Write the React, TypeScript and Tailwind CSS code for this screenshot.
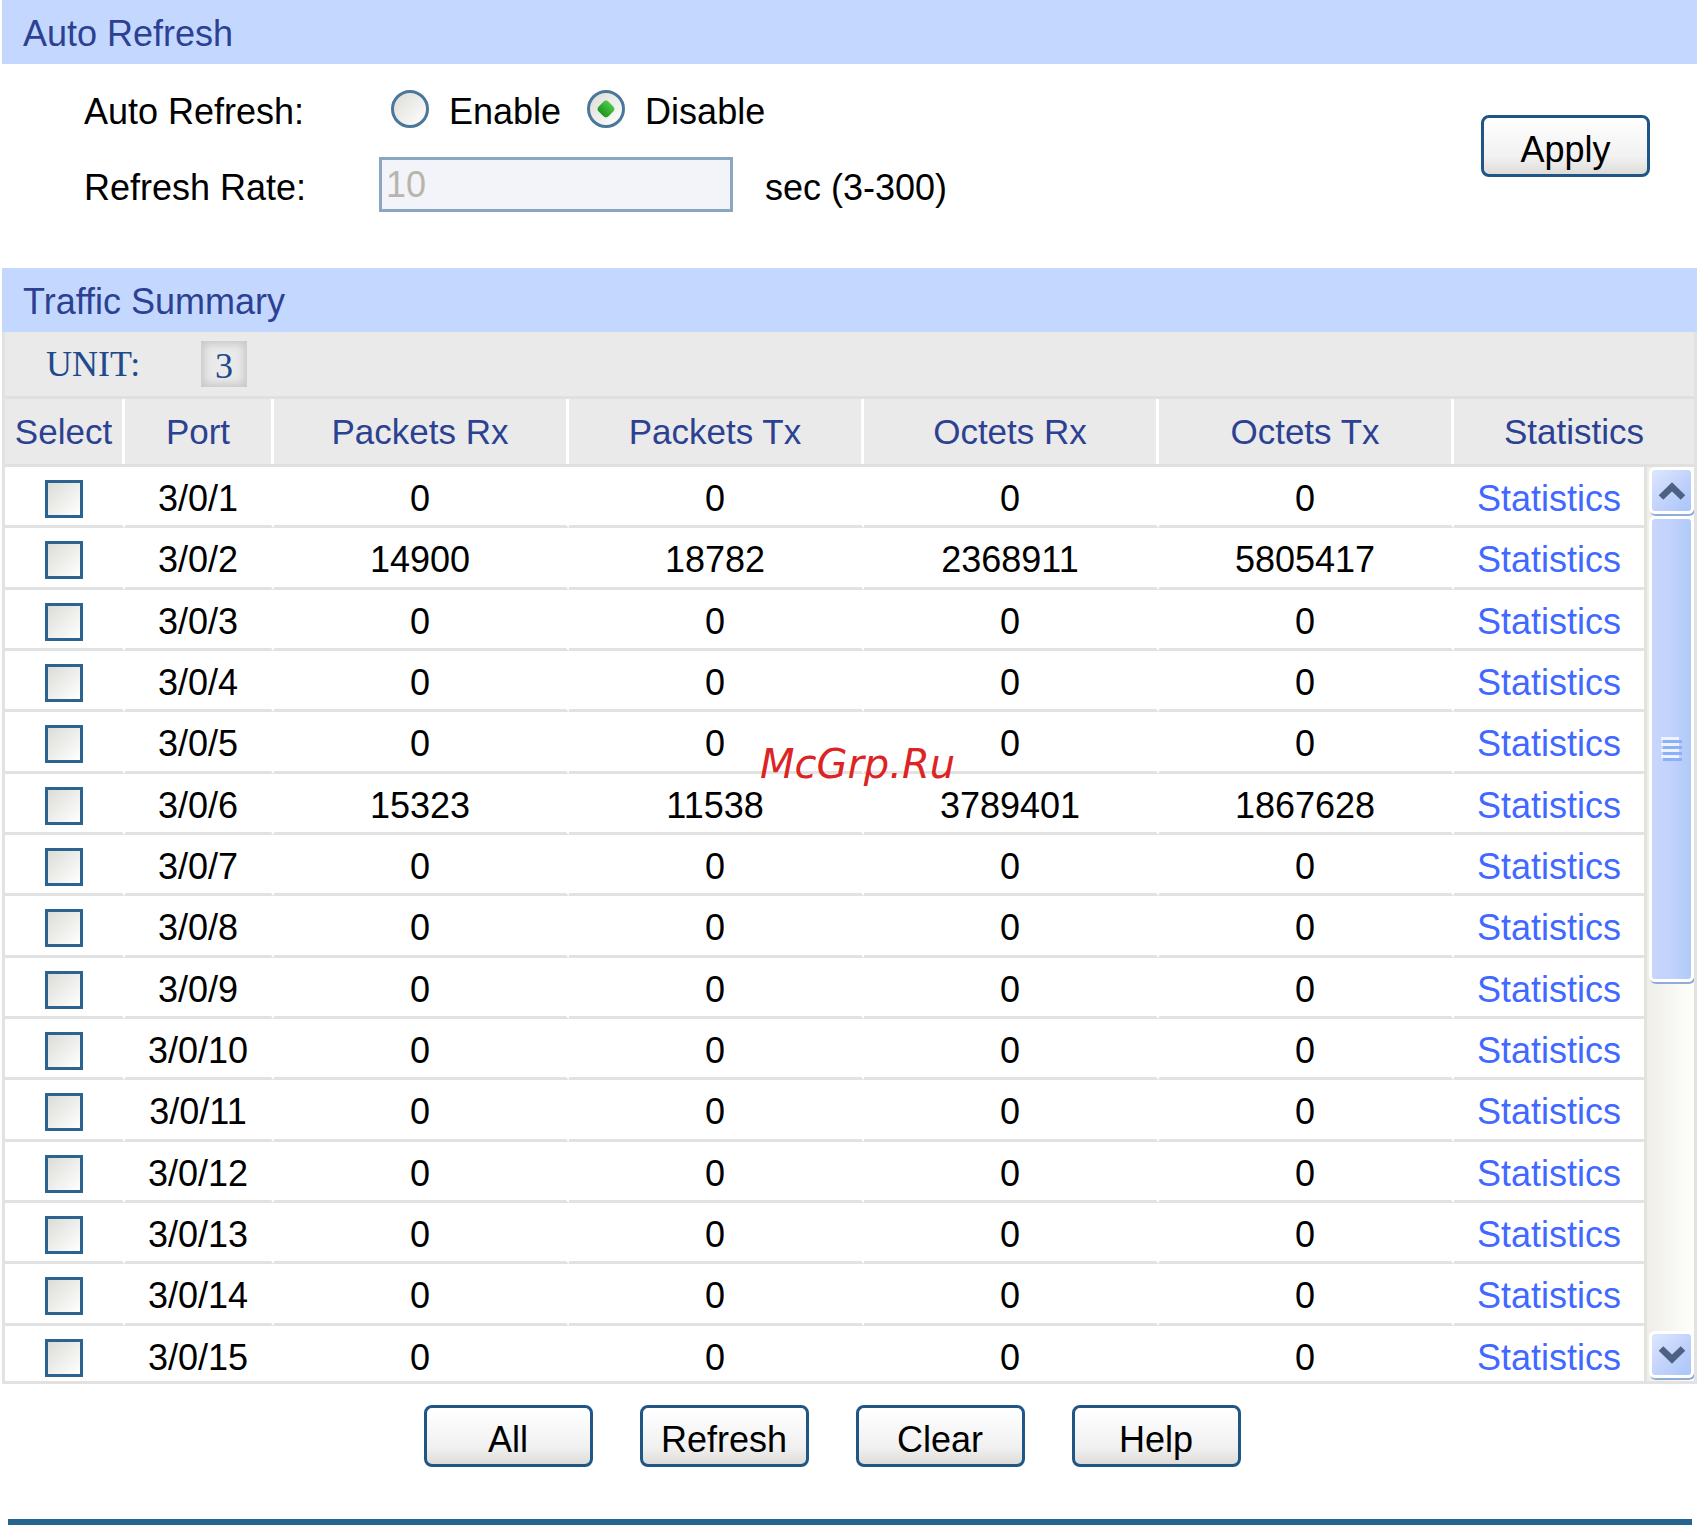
import { useState } from "react";

type PortRow = {
  port: string;
  packetsRx: number;
  packetsTx: number;
  octetsRx: number;
  octetsTx: number;
};

const traffic: Record<number, [number, number, number, number]> = {
  2: [14900, 18782, 2368911, 5805417],
  6: [15323, 11538, 3789401, 1867628],
};

const rows: PortRow[] = Array.from({ length: 15 }, (_, i) => {
  const [packetsRx, packetsTx, octetsRx, octetsTx] = traffic[i + 1] ?? [0, 0, 0, 0];
  return { port: `3/0/${i + 1}`, packetsRx, packetsTx, octetsRx, octetsTx };
});

const actions = ["All", "Refresh", "Clear", "Help"];

const radioClass =
  "size-[38px] shrink-0 appearance-none rounded-full border-[3px] border-[#4b7799] bg-linear-to-br from-[#dcdcd7] to-white flex items-center justify-center checked:before:block checked:before:size-[14px] checked:before:rotate-45 checked:before:rounded-[4px] checked:before:bg-linear-to-b checked:before:from-[#4cc94a] checked:before:to-[#1c961c]";

function SectionTitle({ children }: { children: string }) {
  return (
    <h2 className="flex h-16 items-center bg-[#c4d8ff] pt-[3px] pl-[21px] text-[#2c4192]">
      {children}
    </h2>
  );
}

function PushButton({ children }: { children: string }) {
  return (
    <button
      type="button"
      className="flex h-[62px] w-[169px] shrink-0 items-center justify-center rounded-[8px] border-[3px] border-[#205685] bg-linear-to-b from-white via-[#f1f1f1] via-70% to-[#dddcd8] pt-2 text-black"
    >
      {children}
    </button>
  );
}

function ScrollArrow({ up }: { up?: boolean }) {
  return (
    <button
      type="button"
      aria-label={up ? "Scroll up" : "Scroll down"}
      className="flex h-[47px] w-[45px] shrink-0 items-center justify-center rounded-[6px] border-[3px] border-white bg-linear-to-br from-[#dde7ff] via-[#c3d3fb] to-[#a9c5f8] shadow-[1px_2px_0_0_#8eaed8]"
    >
      <svg viewBox="0 0 28 18" className="h-[18px] w-7" fill="none" stroke="#4d6185" strokeWidth="6.5">
        <path d={up ? "M3 15.500 14 4.800 25 15.500" : "M3 2.500 14 13.200 25 2.500"} />
      </svg>
    </button>
  );
}

function ScrollBar() {
  return (
    <div className="flex w-[50px] shrink-0 flex-col items-end border-l-[3px] border-[#e2e2de] bg-linear-to-r from-[#efeee8] to-[#fefefb]">
      <ScrollArrow up />
      {/* Thumb with its grip */}
      <div className="mt-[2px] flex h-[466px] w-[45px] items-center justify-center rounded-[6px] border-[3px] border-white bg-linear-to-r from-[#c9d6fc] via-[#c1d2fc] to-[#b0caf8] shadow-[1px_2px_0_0_#8eaed8]">
        <svg viewBox="0 0 21 24" className="h-6 w-[21px]" strokeWidth="3">
          <path d="M0 1.5h18M0 7.5h18M0 13.5h18M0 19.5h18" stroke="#eef4ff" />
          <path d="M2 4.5h19M2 10.5h19M2 16.5h19M2 22.5h19" stroke="#8cb0f8" />
        </svg>
      </div>
      <div className="mt-auto pb-[3px]">
        <ScrollArrow />
      </div>
    </div>
  );
}

export default function App() {
  const [refresh, setRefresh] = useState("disable");

  const th = "border-r-[3px] border-white p-0 font-normal last:border-r-0";
  const td =
    "border-r-[3px] border-b-[3px] border-r-white border-b-[#e2e2e2] p-0 pt-1.5 last:border-r-0";

  return (
    <main className="bg-white pr-1 pl-0.5 font-['Liberation_Sans',Arial,sans-serif] text-[36px] leading-none text-black">
      <section>
        <SectionTitle>Auto Refresh</SectionTitle>
        <form className="flex justify-between pt-[23px] pr-[47px] pb-14 pl-[82px]">
          <div className="grid grid-cols-[295px_auto] gap-y-[26px]">
            <span className="flex h-11 items-center pt-1.5">Auto Refresh:</span>
            <div className="flex h-11 items-center pl-3">
              {["Enable", "Disable"].map((label) => {
                const value = label.toLowerCase();
                return (
                  <label key={value} className="mr-[26px] flex items-center gap-5">
                    <input
                      type="radio"
                      name="autoRefresh"
                      className={radioClass}
                      checked={refresh === value}
                      onChange={() => setRefresh(value)}
                    />
                    <span className="pt-1.5">{label}</span>
                  </label>
                );
              })}
            </div>

            <label htmlFor="rate" className="flex items-center pt-1.5">
              Refresh Rate:
            </label>
            <div className="flex items-center">
              <input
                id="rate"
                type="text"
                defaultValue="10"
                disabled={refresh === "disable"}
                className="h-[55px] w-[354px] border-[3px] border-[#8aa6c1] bg-[#f2f4fa] pl-1 disabled:text-[#b9b4ac]"
              />
              <span className="pt-1.5 pl-8">sec (3-300)</span>
            </div>
          </div>
          <div className="pt-7">
            <PushButton>Apply</PushButton>
          </div>
        </form>
      </section>

      <section className="relative">
        <SectionTitle>Traffic Summary</SectionTitle>
        <div className="border-x-[3px] border-b-[3px] border-[#e2e2e2]">
          <div className="flex h-[67px] items-center border-b-[3px] border-[#e0e0e0] bg-[#eaeaea] pl-[41px] font-['Liberation_Serif','Times_New_Roman',serif] text-[#1f4a8c]">
            <span className="w-[155px]">UNIT:</span>
            <button
              type="button"
              className="size-[46px] bg-[#eaeaea] pt-1 shadow-[inset_0_0_8px_3px_#c6c6c6]"
            >
              3
            </button>
          </div>

          <table className="h-[68px] w-full table-fixed border-separate border-spacing-0 border-b-[3px] border-[#e0e0e0] bg-[#eaeaea] text-center text-[35px] text-[#2c4192]">
            <thead>
              <tr>
                <th className={`${th} w-[120px]`}>Select</th>
                <th className={`${th} w-[149px]`}>Port</th>
                <th className={th}>Packets Rx</th>
                <th className={th}>Packets Tx</th>
                <th className={th}>Octets Rx</th>
                <th className={th}>Octets Tx</th>
                <th className={`${th} w-[240px]`}>Statistics</th>
              </tr>
            </thead>
          </table>

          {/* Scrolling body */}
          <div className="flex h-[914px] overflow-hidden">
            <div className="min-w-0 grow">
              <table className="h-[920px] w-full table-fixed border-separate border-spacing-0 text-center">
                <colgroup>
                  <col className="w-[120px]" />
                  <col className="w-[149px]" />
                  <col span={4} />
                  <col className="w-[190px]" />
                </colgroup>
                <tbody>
                  {rows.map((row) => (
                    <tr key={row.port}>
                      <td className={td}>
                        <input
                          type="checkbox"
                          aria-label={`Select ${row.port}`}
                          className="mx-auto block size-[38px] appearance-none border-[3px] border-[#2c6390] bg-linear-to-br from-[#dcdcd7] to-white checked:bg-[#2c6390] checked:bg-none"
                        />
                      </td>
                      <td className={td}>{row.port}</td>
                      <td className={td}>{row.packetsRx}</td>
                      <td className={td}>{row.packetsTx}</td>
                      <td className={td}>{row.octetsRx}</td>
                      <td className={td}>{row.octetsTx}</td>
                      <td className={td}>
                        <a href="#statistics" className="text-[#4169ff]">
                          Statistics
                        </a>
                      </td>
                    </tr>
                  ))}
                </tbody>
              </table>
            </div>
            <ScrollBar />
          </div>
        </div>

        <div className="pointer-events-none absolute top-[476px] left-1/2 -translate-x-1/2 pl-4 font-['DejaVu_Sans',sans-serif] text-[40px] text-[#dc2424] italic">
          McGrp.Ru
        </div>
      </section>

      <div className="flex justify-center gap-[47px] pt-[21px] pr-[35px] pb-[52px]">
        {actions.map((label) => (
          <PushButton key={label}>{label}</PushButton>
        ))}
      </div>
      <footer className="mr-[5px] ml-1.5 h-[7px] bg-[#266591]" />
    </main>
  );
}
